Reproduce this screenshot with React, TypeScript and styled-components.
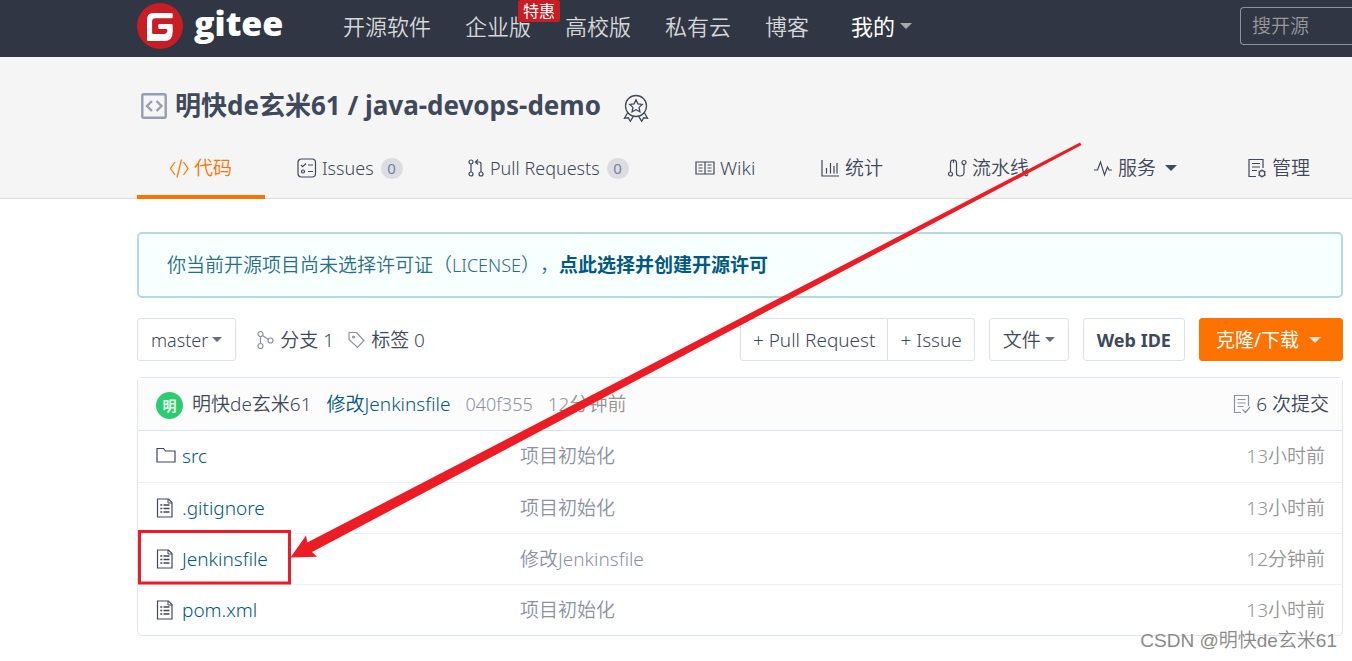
import React from "react";
import styled, { createGlobalStyle } from "styled-components";

const c = {
  ink: "#40485b",
  muted: "#8c92a4",
  link: "#005980",
  time: "#959595",
  line: "#dce3e8",
  orange: "#fe7300",
  red: "#c71d23",
  mark: "#ed1c24",
};

const Global = createGlobalStyle`
  * { box-sizing: border-box; }
  body {
    margin: 0;
    background: #fff;
    color: ${c.ink};
    font-family: "Noto Sans", "Noto Sans CJK SC", sans-serif;
    font-size: 19px;
    font-weight: 350;
    line-height: 26px;
    text-spacing-trim: space-all;
  }
  a { color: inherit; text-decoration: none; }
  button, input { font: inherit; color: inherit; }
`;

const Page = styled.div`
  position: relative;
  overflow: hidden;
  padding-bottom: 24px;
`;

const TopBar = styled.header`
  display: flex;
  align-items: center;
  height: 57px;
  padding: 0 0 5px 137px;
  background: #303643;
`;

const Brand = styled.a`
  display: flex;
  align-items: center;
  gap: 11px;
  width: 206px;
`;

const Wordmark = styled.span`
  padding-bottom: 6px;
  color: #fff;
  font-family: "Open Sans", sans-serif;
  font-size: 34px;
  font-weight: 800;
  line-height: 46px;
`;

const Menu = styled.nav`
  display: flex;
  gap: 34px;
  font-size: 22px;
  line-height: 32px;
  white-space: nowrap;
`;

const MenuItem = styled.a<{ $active?: boolean }>`
  position: relative;
  display: flex;
  align-items: center;
  gap: 5px;
  margin-left: ${(p) => (p.$active ? 8 : 0)}px;
  color: ${(p) => (p.$active ? "#fff" : "#d6d7d9")};
  font-weight: ${(p) => (p.$active ? 400 : 350)};
`;

const Promo = styled.span`
  position: absolute;
  top: -10px;
  left: 53px;
  padding: 0 5px;
  border-radius: 3px;
  background: ${c.red};
  color: #fff;
  font-size: 16px;
  font-weight: 400;
  line-height: 22px;
`;

const Caret = styled.span<{ $size?: number; $color?: string; $gap?: number }>`
  display: inline-block;
  margin-left: ${(p) => p.$gap ?? 0}px;
  border: ${(p) => p.$size ?? 5}px solid transparent;
  border-top-color: ${(p) => p.$color ?? "#666d7c"};
  border-bottom: 0;
`;

const Latin = styled.span`
  font-size: 18px;
`;

const Search = styled.input`
  width: 112px;
  height: 38px;
  margin-left: auto;
  padding: 0 11px;
  border: 1px solid #8c92a4;
  border-right: 0;
  border-radius: 4px 0 0 4px;
  background: transparent;
  &::placeholder { color: #999; opacity: 1; }
`;

const RepoHeader = styled.section`
  padding: 30px 10px 0 137px;
  border-bottom: 1px solid #dcdcdc;
  background: #f5f5f5;
`;

const Title = styled.h1`
  display: flex;
  align-items: center;
  gap: 8px;
  height: 38px;
  margin: 0;
  padding-left: 4px;
  font-size: 26px;
  font-weight: 700;
  line-height: 36px;
  white-space: nowrap;
  span { padding-bottom: 2px; }
`;

const Medal = styled.button`
  display: flex;
  margin: 4px 0 0 14px;
  padding: 0;
  border: 0;
  background: none;
`;

const Tabs = styled.nav`
  display: grid;
  grid-template-columns: 128fr 170fr 228fr 125fr 127fr 146fr 154fr 127fr;
  margin: 13px 0 -1px;
`;

const Tab = styled.a<{ $active?: boolean }>`
  display: flex;
  align-items: center;
  gap: 5px;
  height: 61px;
  padding: 3px 0 0 32px;
  border-bottom: 4px solid ${(p) => (p.$active ? c.orange : "transparent")};
  color: ${(p) => (p.$active ? c.orange : c.ink)};
  white-space: nowrap;
`;

const Count = styled.span`
  min-width: 22px;
  height: 21px;
  margin-left: 2px;
  border-radius: 11px;
  background: #dcdde0;
  color: #7380a8;
  font-size: 15px;
  font-weight: 400;
  line-height: 21px;
  text-align: center;
`;

const Main = styled.main`
  padding: 33px 9px 0 137px;
`;

const Notice = styled.div`
  padding: 18px 28px;
  border: 2px solid #b3d9e2;
  border-radius: 5px;
  background: #f8ffff;
  color: #276f86;
  a { color: ${c.link}; font-weight: 700; }
`;

const Toolbar = styled.div`
  display: flex;
  align-items: center;
  margin: 20px 0 16px;
  white-space: nowrap;
`;

const Button = styled.button<{ $primary?: boolean; $bold?: boolean }>`
  display: flex;
  align-items: center;
  justify-content: center;
  gap: ${(p) => (p.$primary ? 10 : 4)}px;
  height: 43px;
  padding: ${(p) => (p.$primary ? "0 21px 0 16px" : "0 13px")};
  border: 1px solid ${(p) => (p.$primary ? c.orange : c.line)};
  border-radius: 3px;
  background: ${(p) => (p.$primary ? c.orange : "#fff")};
  color: ${(p) => (p.$primary ? "#fff" : c.ink)};
  font-size: ${(p) => (p.$bold ? 18 : 19)}px;
  font-weight: ${(p) => (p.$bold ? 700 : p.$primary ? 400 : 350)};
`;

const RefLinks = styled.div`
  display: flex;
  gap: 14px;
  margin-left: 21px;
`;

const RefLink = styled.a`
  display: flex;
  align-items: center;
  gap: 6px;
`;

const Actions = styled.div`
  display: flex;
  align-items: center;
  gap: 14px;
  margin-left: auto;
`;

const Group = styled.div`
  display: flex;
  button { padding: 0 12px; }
  button:first-child { border-radius: 3px 0 0 3px; }
  button:last-child { border-left: 0; border-radius: 0 3px 3px 0; }
`;

const Files = styled.section`
  border: 1px solid #e1e6ea;
  border-radius: 5px;
`;

const Commit = styled.div`
  display: flex;
  align-items: center;
  gap: 15px;
  height: 53px;
  padding: 0 13px 0 18px;
  border-bottom: 1px solid ${c.line};
  background: #fcfcfc;
  white-space: nowrap;
`;

const Author = styled.a`
  display: flex;
  align-items: center;
  gap: 9px;
`;

const Avatar = styled.span`
  width: 27px;
  height: 27px;
  margin-top: 3px;
  border-radius: 50%;
  background: #2ecc71;
  color: #e6f9ee;
  font-size: 14px;
  font-weight: 700;
  line-height: 27px;
  text-align: center;
`;

const CommitLink = styled.a`
  color: ${c.link};
`;

const Muted = styled.span<{ $time?: boolean }>`
  color: ${(p) => (p.$time ? c.time : c.muted)};
`;

const Total = styled.a`
  display: flex;
  align-items: center;
  gap: 5px;
  margin-left: auto;
`;

const Table = styled.table`
  width: 100%;
  border-collapse: collapse;
  table-layout: fixed;
  tr + tr td { border-top: 1px solid #eef2f6; }
`;

const Cell = styled.td<{ $kind: "name" | "message" | "age" }>`
  width: ${(p) => (p.$kind === "name" ? "364px" : p.$kind === "age" ? "200px" : "auto")};
  height: 51px;
  padding: 0 17px 0 18px;
  color: ${(p) => (p.$kind === "age" ? c.time : c.muted)};
  text-align: ${(p) => (p.$kind === "age" ? "right" : "left")};
`;

const FileLink = styled.a`
  display: flex;
  align-items: center;
  gap: 6px;
  color: ${c.link};
  svg { color: ${c.ink}; }
`;

const Annotation = styled.svg`
  position: absolute;
  top: 0;
  left: 0;
  pointer-events: none;
`;

const Watermark = styled.span`
  position: absolute;
  right: 15px;
  bottom: 5px;
  color: #8a8a8a;
  font-family: "Liberation Sans", "Noto Sans CJK SC", sans-serif;
  font-size: 19px;
  line-height: 28px;
  text-shadow: 1px 1px 1px #fff;
`;

type IconProps = { w?: number; h?: number; sw?: number; color?: string; children: React.ReactNode };
const Icon = ({ w = 20, h = 20, sw = 1.2, color = "currentColor", children }: IconProps) => (
  <svg width={w} height={h} viewBox={`0 0 ${w} ${h}`} fill="none" stroke={color} strokeWidth={sw} aria-hidden="true">
    {children}
  </svg>
);

const FolderIcon = () => (
  <Icon><path d="M1 2.500h6.500l2 2.500H19v11H1z" /></Icon>
);
const FileIcon = () => (
  <Icon>
    <path d="M1.500 1h11l3.500 3.500V19H1.500z" />
    <path d="M12 1v4h4" strokeWidth="1" />
    <path d="M4.300 7h2M4.300 10.500h2M4.300 14h2M7.500 7h6M7.500 10.500h6M7.500 14h6" strokeWidth="1.300" />
  </Icon>
);

const files = [
  { name: "src", folder: true, message: "项目初始化", age: "13小时前" },
  { name: ".gitignore", message: "项目初始化", age: "13小时前" },
  { name: "Jenkinsfile", message: "修改Jenkinsfile", age: "12分钟前" },
  { name: "pom.xml", message: "项目初始化", age: "13小时前" },
];

export default function App() {
  return (
    <Page>
      <Global />
      <TopBar>
        <Brand href="#" aria-label="gitee">
          <svg width="46" height="46" viewBox="0 0 46 46" aria-hidden="true">
            <circle cx="23" cy="23" r="23" fill={c.red} />
            <path
              fill="#fff"
              d="M16 10h18.500q1.200 0 1.200 1.200v2.800q0 1.200-1.200 1.200H18.500q-3.400 0-3.400 3.400v11.100q0 1.200 1.200 1.200h10.600q3.400 0 3.400-3.400v-.8q0-.700-.7-.7h-7.100q-1.200 0-1.200-1.200v-2.600q0-1.200 1.200-1.200h12q1.200 0 1.200 1.200v6.500q0 9.300-8.500 9.300H11.200q-1.200 0-1.200-1.200V17q0-7 6-7z"
            />
          </svg>
          <Wordmark>gitee</Wordmark>
        </Brand>
        <Menu>
          <MenuItem href="#">开源软件</MenuItem>
          <MenuItem href="#">企业版<Promo>特惠</Promo></MenuItem>
          <MenuItem href="#">高校版</MenuItem>
          <MenuItem href="#">私有云</MenuItem>
          <MenuItem href="#">博客</MenuItem>
          <MenuItem href="#" $active>我的<Caret $size={6} $color="#a6a9af" /></MenuItem>
        </Menu>
        <Search type="search" aria-label="搜开源" placeholder="搜开源" />
      </TopBar>

      <RepoHeader>
        <Title>
          <Icon w={26} h={26} sw={2.4} color="#989eb0">
            <rect x="1.300" y="1.300" width="23.400" height="23.400" rx="1.500" />
            <path d="M11 8l-5 5 5 5M15.500 8l5 5-5 5" />
          </Icon>
          <span><a href="#">明快de玄米61</a> / <a href="#">java-devops-demo</a></span>
          <Medal type="button" aria-label="推荐">
            <Icon w={26} h={28} sw={1.3}>
              <circle cx="13" cy="12" r="10.500" />
              <path d="M13 5.800l1.900 4 4.400.6-3.200 3 .8 4.400-3.900-2.100-3.900 2.100.8-4.400-3.200-3 4.400-.6zM4.500 19l-3 5.300 3.800-.5 2 3.500 3-5M21.500 19l3 5.300-3.800-.5-2 3.500-3-5" />
            </Icon>
          </Medal>
        </Title>
        <Tabs>
          <Tab href="#" $active>
            <Icon><path d="M6 4L1.500 10.500 6 17M14.500 4l4.500 6.500-4.500 6.500M12.500 1.500L8 19.500" /></Icon>
            代码
          </Tab>
          <Tab href="#">
            <Icon>
              <rect x="1" y="1" width="17.500" height="18" rx="3.500" />
              <path d="M4 7l1.600 1.600L9 5.500M11 7h5M11 13.500h5" />
              <circle cx="6" cy="13.500" r="1.500" />
            </Icon>
            <Latin>Issues</Latin><Count>0</Count>
          </Tab>
          <Tab href="#">
            <Icon w={18}>
              <circle cx="4" cy="4" r="2" /><circle cx="4" cy="16" r="2" /><circle cx="14" cy="16" r="2" />
              <path d="M4 6v8M14 14V6q0-2-2-2H8.500M11 1.500L8.500 4 11 6.500" />
            </Icon>
            <Latin>Pull Requests</Latin><Count>0</Count>
          </Tab>
          <Tab href="#">
            <Icon>
              <path d="M1 4h18v12H1zM10 4v12M3.500 7h4M3.500 10h4M3.500 13h4M12.500 7h4M12.500 10h4M12.500 13h4" />
            </Icon>
            Wiki
          </Tab>
          <Tab href="#">
            <Icon><path d="M2 2v16h17M6.500 15.500V10M10.500 15.500V5M14 15.500V8M17 15.500V5" /></Icon>
            统计
          </Tab>
          <Tab href="#">
            <Icon>
              <circle cx="3.500" cy="16" r="2" /><circle cx="17" cy="4.500" r="2" />
              <path d="M3.500 14V5q0-3 3-3t3 3v10q0 3 3.500 3t4-3V6.500M6.500 2v3" />
            </Icon>
            流水线
          </Tab>
          <Tab href="#">
            <Icon><path d="M1 12h3.500L7.500 4l4 13L14.500 9l1.500 3h3" /></Icon>
            服务
            <Caret $size={6} $color={c.ink} $gap={4} />
          </Tab>
          <Tab href="#">
            <Icon>
              <path d="M9 18.500H2V1.500h14V10M5 5.500h8M5 9h8M5 12.500h5M2 18.500h7" />
              <circle cx="15" cy="15.500" r="2.800" />
              <path d="M15 11.500v1.200M15 18.300v1.200M11.500 13.500l1 .6M17.500 16.900l1 .6M18.500 13.500l-1 .6M12.500 16.900l-1 .6" />
            </Icon>
            管理
          </Tab>
        </Tabs>
      </RepoHeader>

      <Main>
        <Notice>
          你当前开源项目尚未选择许可证（<Latin>LICENSE</Latin>），<a href="#">点此选择并创建开源许可</a>
        </Notice>

        <Toolbar>
          <Button type="button" aria-haspopup="listbox"><Latin>master</Latin><Caret /></Button>
          <RefLinks>
            <RefLink href="#">
              <Icon w={17} color="#8c92a4">
                <circle cx="3.500" cy="4" r="2.500" /><circle cx="3.500" cy="16" r="2.500" /><circle cx="13.500" cy="10.500" r="2.500" />
                <path d="M3.500 6.500v7M5.500 5.500l5.800 4" />
              </Icon>
              分支 1
            </RefLink>
            <RefLink href="#">
              <Icon w={17} color="#8c92a4">
                <path d="M1 2.500h7.500l7.500 8-6.500 7L1 9.500z" /><circle cx="5.500" cy="7" r="1" />
              </Icon>
              标签 0
            </RefLink>
          </RefLinks>
          <Actions>
            <Group>
              <Button type="button">+ Pull Request</Button>
              <Button type="button">+ Issue</Button>
            </Group>
            <Button type="button" aria-haspopup="menu">文件<Caret /></Button>
            <Button type="button" $bold>Web IDE</Button>
            <Button type="button" $primary aria-haspopup="menu">克隆/下载<Caret $size={6} $color="#ffe3cc" /></Button>
          </Actions>
        </Toolbar>

        <Files>
          <Commit>
            <Author href="#"><Avatar>明</Avatar>明快de玄米61</Author>
            <CommitLink href="#">修改Jenkinsfile</CommitLink>
            <Muted><Latin>040f355</Latin></Muted>
            <Muted $time>12分钟前</Muted>
            <Total href="#">
              <Icon w={18} color="#8c92a4">
                <path d="M8 18.500H1.500V1.500h14V12M4.500 5.500h8M4.500 9h8M4.500 12.500h6M9.500 15.500l3 3 4.500-5.500" />
              </Icon>
              6 次提交
            </Total>
          </Commit>
          <Table>
            <tbody>
              {files.map((f) => (
                <tr key={f.name}>
                  <Cell $kind="name">
                    <FileLink href="#">{f.folder ? <FolderIcon /> : <FileIcon />}{f.name}</FileLink>
                  </Cell>
                  <Cell $kind="message">{f.message}</Cell>
                  <Cell $kind="age">{f.age}</Cell>
                </tr>
              ))}
            </tbody>
          </Table>
        </Files>
      </Main>

      <Annotation width="1352" height="661" viewBox="0 0 1352 661" aria-hidden="true">
        <rect x="139.500" y="531.500" width="150" height="51.500" fill="none" stroke={c.mark} strokeWidth="3" />
        <path d="M290.500 557.500L306 535.500l1.300 7L1080 142.500l1.500 2.500L312 552l5 4.800z" fill={c.mark} />
      </Annotation>
      <Watermark>CSDN @明快de玄米61</Watermark>
    </Page>
  );
}
